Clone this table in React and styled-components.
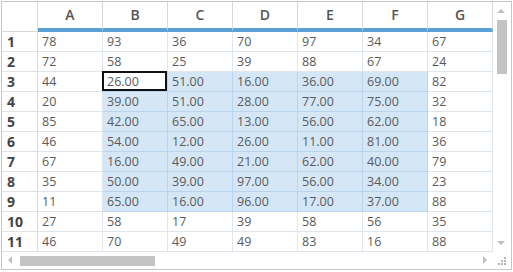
import React from "react";
import styled, { createGlobalStyle } from "styled-components";

const Global = createGlobalStyle`
	body {
		margin: 0;
		padding: 1px;
		background: #fff;
		font-family: "Open Sans", "Noto Sans", sans-serif;
	}
`;

const Frame = styled.div`
	width: 509px;
	height: 267px;
	border: 1px solid #c6c6c6;
	display: grid;
	grid-template-columns: 491px 17px;
	grid-template-rows: 250px 17px;
	overflow: hidden;
`;

const Sheet = styled.div`
	display: grid;
	grid-template-columns: 36px repeat(7, 65px);
	grid-template-rows: 30px repeat(11, 20px);
`;

const Corner = styled.div`
	border-right: 1px solid #d9d9d9;
	border-bottom: 1px solid #d9d9d9;
`;

const ColHead = styled.div`
	border-right: 1px solid #d9d9d9;
	border-bottom: 4px solid #5aa1d6;
	display: flex;
	align-items: center;
	justify-content: center;
	font-size: 14px;
	font-weight: 600;
	color: #555;
	padding-bottom: 1px;
`;

const RowHead = styled.div`
	border-right: 1px solid #d9d9d9;
	border-bottom: 1px solid #e3e3e3;
	display: flex;
	align-items: center;
	padding-left: 5px;
	font-size: 14px;
	font-weight: 700;
	color: #444;
`;

const Cell = styled.div`
	border-right: 1px solid ${(p) => (p.$sel ? "#b9d4ee" : "#dfe6ee")};
	border-bottom: 1px solid ${(p) => (p.$sel ? "#b9d4ee" : "#dfe6ee")};
	background: ${(p) => (p.$sel && !p.$active ? "#d5e7f7" : "#fff")};
	display: flex;
	align-items: center;
	font-size: 12.5px;
	color: #5a5a5a;
	box-shadow: ${(p) => (p.$active ? "inset 0 0 0 2px #111" : "none")};
	margin: ${(p) => (p.$active ? "-1px 0 0 -1px" : "0")};
	padding-left: ${(p) => (p.$active ? "5px" : "4px")};
	padding-top: ${(p) => (p.$active ? "1px" : "0")};
`;

const VBar = styled.div`
	background: #fff;
	position: relative;
	display: flex;
	flex-direction: column;
	align-items: center;
`;

const VThumb = styled.div`
	width: 10px;
	height: 54px;
	background: #c3c3c3;
	margin-top: 18px;
`;

const HBar = styled.div`
	background: #fff;
	display: flex;
	align-items: center;
`;

const HTrack = styled.div`
	position: relative;
	width: 100%;
	height: 17px;
	display: flex;
	align-items: center;
`;

const HThumb = styled.div`
	height: 10px;
	width: 135px;
	background: #c3c3c3;
	margin-left: 18px;
`;

const Arrow = styled.span`
	position: absolute;
	width: 0;
	height: 0;
	border: 4px solid transparent;
	${(p) => p.$dir === "up" && `border-bottom-color:#c0c0c0; border-top-width:0; top:7px; left:4px;`}
	${(p) => p.$dir === "down" && `border-top-color:#c0c0c0; border-bottom-width:0; bottom:7px; left:4px;`}
	${(p) => p.$dir === "left" && `border-right-color:#c0c0c0; border-left-width:0; left:6px; top:4px;`}
	${(p) => p.$dir === "right" && `border-left-color:#c0c0c0; border-right-width:0; right:6px; top:4px;`}
`;

const Grip = styled.div`
	background: #fff;
	position: relative;
`;

const Dot = styled.span`
	position: absolute;
	width: 2px;
	height: 2px;
	background: #b5b5b5;
`;

const cols = ["A", "B", "C", "D", "E", "F", "G"];
const data = [
	[78, 93, 36, 70, 97, 34, 67],
	[72, 58, 25, 39, 88, 67, 24],
	[44, "26.00", "51.00", "16.00", "36.00", "69.00", 82],
	[20, "39.00", "51.00", "28.00", "77.00", "75.00", 32],
	[85, "42.00", "65.00", "13.00", "56.00", "62.00", 18],
	[46, "54.00", "12.00", "26.00", "11.00", "81.00", 36],
	[67, "16.00", "49.00", "21.00", "62.00", "40.00", 79],
	[35, "50.00", "39.00", "97.00", "56.00", "34.00", 23],
	[11, "65.00", "16.00", "96.00", "17.00", "37.00", 88],
	[27, 58, 17, 39, 58, 56, 35],
	[46, 70, 49, 49, 83, 16, 88],
];

const dots = [
	[11, 5],
	[8, 8],
	[11, 8],
	[5, 11],
	[8, 11],
	[11, 11],
];

export default function App() {
	return (
		<>
			<Global />
			<Frame>
				<Sheet>
					<Corner />
					{cols.map((c) => (
						<ColHead key={c}>{c}</ColHead>
					))}
					{data.map((row, r) => (
						<React.Fragment key={r}>
							<RowHead>{r + 1}</RowHead>
							{row.map((v, c) => {
								const sel = r >= 2 && r <= 8 && c >= 1 && c <= 5;
								const active = r === 2 && c === 1;
								return (
									<Cell key={c} $sel={sel} $active={active}>
										{v}
									</Cell>
								);
							})}
						</React.Fragment>
					))}
				</Sheet>
				<VBar>
					<Arrow $dir="up" />
					<VThumb />
					<Arrow $dir="down" />
				</VBar>
				<HBar>
					<HTrack>
						<Arrow $dir="left" />
						<HThumb />
						<Arrow $dir="right" />
					</HTrack>
				</HBar>
				<Grip>
					{dots.map(([x, y], i) => (
						<Dot key={i} style={{ left: x, top: y }} />
					))}
				</Grip>
			</Frame>
		</>
	);
}
